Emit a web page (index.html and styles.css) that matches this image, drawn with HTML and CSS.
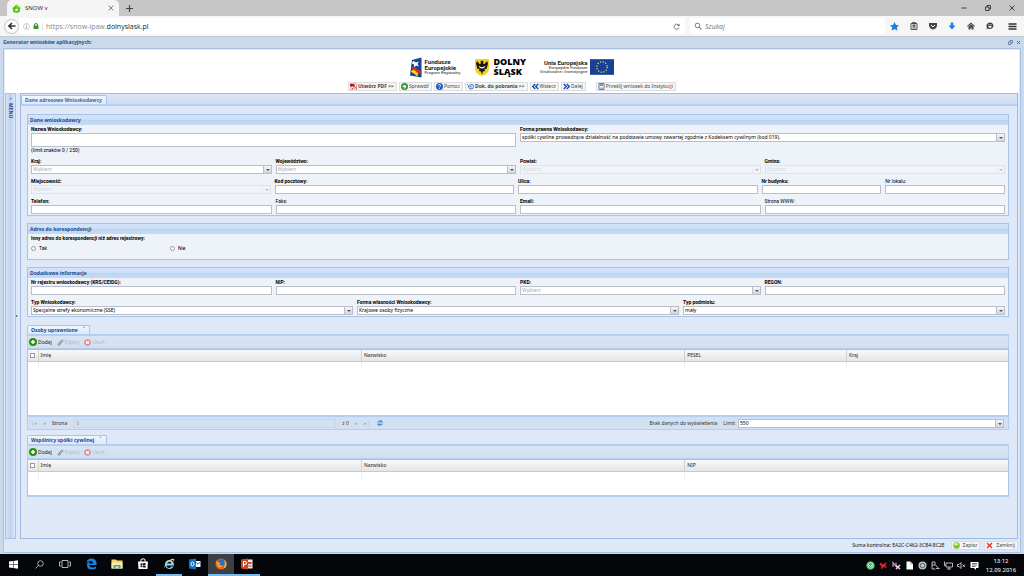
FILE: index.html
```html
<!DOCTYPE html>
<html lang="pl">
<head>
<meta charset="utf-8">
<title>SNOW v</title>
<link rel="stylesheet" href="styles.css">
</head>
<body>
<svg class="defs" aria-hidden="true">
  <symbol id="add" viewBox="0 0 16 16"><circle cx="8" cy="8" r="8" fill="#2f8f14"/><path d="M8 4v8M4 8h8" stroke="#fff" stroke-width="3"/></symbol>
  <symbol id="clip" viewBox="0 0 16 16"><path d="M2 13 10 3q3-2 4 1L6 14q-3 1-3-1l7-8" fill="none" stroke="#777" stroke-width="1.6"/></symbol>
  <symbol id="del" viewBox="0 0 16 16"><circle cx="8" cy="8" r="7.5" fill="#e08a94"/><path d="M5 5l6 6M11 5l-6 6" stroke="#fff" stroke-width="3"/></symbol>
  <symbol id="refresh" viewBox="0 0 16 16"><path d="M2 8q1-6 7-5l1-2 4 5-6 2 1-2q-4 0-7 2zM14 8q-1 6-7 5l-1 2-4-5 6-2-1 2q4 0 7-2z" fill="#4a93e0"/></symbol>
</svg>

<div class="tabstrip">
  <div class="browser-tab">
    <svg class="i9" viewBox="0 0 16 16"><path d="M0 8 8 1l8 6-2 2v5l-6 2-6-2V9z" fill="#55c21c"/><path d="M6 9l4-1v4l-4 1z" fill="#e9ffd8"/><path d="M8 1l8 6-3 1-6-4z" fill="#8be04a"/></svg>
    <span>SNOW v</span>
    <svg class="i6 tab-close" viewBox="0 0 12 12"><path d="M1 1l10 10M11 1 1 11" stroke="#666" stroke-width="1.6"/></svg>
  </div>
  <svg class="i7 newtab" viewBox="0 0 12 12"><path d="M6 0v12M0 6h12" stroke="#444" stroke-width="2"/></svg>
  <div class="win-buttons">
    <svg class="i6" viewBox="0 0 12 12"><path d="M1 6h10" stroke="#222" stroke-width="1.6"/></svg>
    <svg class="i6" viewBox="0 0 12 12"><path d="M1 4h7v7H1zM4 4V1h7v7H8" fill="none" stroke="#222" stroke-width="1.6"/></svg>
    <svg class="i6" viewBox="0 0 12 12"><path d="M1 1l10 10M11 1 1 11" stroke="#222" stroke-width="1.6"/></svg>
  </div>
</div>

<div class="navbar">
  <button class="back" aria-label="Wstecz"><svg class="i8" viewBox="0 0 16 16"><path d="M8 2 2 8l6 6M2 8h13" fill="none" stroke="#333" stroke-width="3.2"/></svg></button>
  <div class="urlbar">
    <svg class="i7" viewBox="0 0 14 14"><circle cx="7" cy="7" r="6" fill="none" stroke="#999"/><path d="M7 6v5M7 3v2" stroke="#888" stroke-width="1.4"/></svg>
    <svg class="i6" viewBox="0 0 12 12"><path d="M3 6V4q0-3 3-3t3 3v2" fill="none" stroke="#3c9a28" stroke-width="2"/><path d="M1 5h10v7H1z" fill="#3c9a28"/></svg>
    <span class="url">https://snow-ipaw.<b>dolnyslask.pl</b></span>
    <svg class="i7 reload" viewBox="0 0 14 14"><path d="M11 4A5 5 0 1 0 12 9" fill="none" stroke="#666" stroke-width="1.7"/><path d="M13 1v5H8z" fill="#666"/></svg>
  </div>
  <div class="searchbar">
    <svg class="i8" viewBox="0 0 14 14"><circle cx="6" cy="6" r="4" fill="none" stroke="#777" stroke-width="1.7"/><path d="M9 9l4 4" stroke="#777" stroke-width="2"/></svg>
    <input class="search" type="text" placeholder="Szukaj" aria-label="Szukaj">
  </div>
  <div class="nav-icons">
    <svg class="i9" viewBox="0 0 18 18"><path d="M9 0l3 6 6 .6-4.500 4.200L15 17.500 9 14l-6 3.500 1.500-6.700L0 6.600 6 6z" fill="#1a7ee6"/></svg>
    <svg class="i8" viewBox="0 0 16 16"><path d="M2 3h12v12H2zM5 1h6v3H5zM5 7h6M5 9.500h6M5 12h6" fill="none" stroke="#444" stroke-width="1.8"/></svg>
    <svg class="i8" viewBox="0 0 16 16"><path d="M0 2h16v5q-1 7-8 8Q1 14 0 7z" fill="#444"/><path d="M4 6l4 4 4-4" fill="none" stroke="#fff" stroke-width="2"/></svg>
    <svg class="i8" viewBox="0 0 16 16"><path d="M5.500 1h5v6H15l-7 8-7-8h4.500z" fill="#1a7ee6"/></svg>
    <svg class="i8" viewBox="0 0 16 16"><path d="M8 1 0 8l1 1.500L8 4l7 5.500L16 8zM3 9v6h4v-4h2v4h4V9L8 5z" fill="#444"/></svg>
    <svg class="i8" viewBox="0 0 16 16"><path d="M8 1a7 6.500 0 1 1-4 12l-3 2 1-4A7 6.500 0 0 1 8 1z" fill="#444"/><path d="M4.500 8h7q-1 4-3.500 4T4.500 8z" fill="#fff"/><path d="M5 4.500h2v2H5zM9 4.500h2v2H9z" fill="#fff"/></svg>
    <svg class="i9 burger" viewBox="0 0 18 18"><path d="M1 4h16M1 9h16M1 14h16" stroke="#333" stroke-width="2.600"/></svg>
  </div>
</div>

<main class="app">
  <header class="app-title">
    <h1>Generator wniosków aplikacyjnych:</h1>
    <svg class="i4" viewBox="0 0 10 10"><path d="M1 4h5v5H1zM4 4V1h5v5H6" fill="none" stroke="#52709e" stroke-width="1.500"/></svg>
    <svg class="i4" viewBox="0 0 10 10"><path d="M2 2l6 6M8 2 2 8" stroke="#52709e" stroke-width="2"/></svg>
  </header>

  <div class="app-frame">
    <div class="banner">
      <div class="logos">
        <div class="logo fe">
          <svg viewBox="0 0 24 40"><path d="M4 5 23 0v40L0 36z" fill="#17458f"/><path d="M7 7l5 3 6-2-3 5 3 5-6-2-4 4V14L3 11z" fill="#fff"/><path d="M2 21q6-5 13 3l8 4v5L9 27z" fill="#e52330"/><path d="M1 28l6-4 10 8-3 6-5-5z" fill="#fbd50b"/></svg>
          <p><b>Fundusze<br>Europejskie</b><small>Program Regionalny</small></p>
        </div>
        <div class="logo ds">
          <svg viewBox="0 0 28 34"><path d="M0 0h28v18q0 12-14 16Q0 30 0 18z" fill="#f5d21c"/><path d="M14 3l3 2-1 4 3 1 5-6 2 5-3 11-4-1 1 5-4 1-2 6-2-6-4-1 1-5-4 1L2 9l2-5 5 6 3-1-1-4z" fill="#181818"/><path d="M7 13q7 7 14 0-2 6-7 6t-7-6z" fill="#fff"/></svg>
          <p><b>DOLNY<br>ŚLĄSK</b></p>
        </div>
        <div class="logo ue">
          <p><b>Unia Europejska</b><small>Europejskie Fundusze<br>Strukturalne i Inwestycyjne</small></p>
          <svg viewBox="0 0 46 30"><path d="M0 0h46v30H0z" fill="#164194"/><circle cx="23" cy="15" r="10" fill="none" stroke="#ffe23d" stroke-width="2.400" stroke-dasharray="2.200 3.036"/></svg>
        </div>
      </div>
      <div class="actions">
        <button class="strong"><svg class="i7" viewBox="0 0 14 14"><path d="M2 0h8l3 3v11H2z" fill="#fff" stroke="#a33"/><path d="M0 2h9v5H0z" fill="#b5121b"/><path d="M4 12q5-4 5-7 0 3 4 5-5-1-9 2z" fill="none" stroke="#b5121b"/></svg>Utwórz PDF &gt;&gt;</button>
        <button><svg class="i7" viewBox="0 0 14 14"><circle cx="7" cy="7" r="7" fill="#2b9c2b"/><path d="M4 4h4l3 3-3 4H5l2-3H3V6h3z" fill="#fff"/></svg>Sprawdź</button>
        <button><svg class="i7" viewBox="0 0 14 14"><circle cx="7" cy="7" r="7" fill="#1d5fc4"/><path d="M5 5q0-2 2-2t2 2-2 3M7 9.500v2" fill="none" stroke="#fff" stroke-width="1.800"/></svg>Pomoc</button>
        <button class="strong"><svg class="i7" viewBox="0 0 14 14"><path d="M3 6q0 6 5 6t5-5-5-4" fill="none" stroke="#3a6fc9" stroke-width="2"/><path d="M0 2l4 5 3-5M7 5v3h3" fill="none" stroke="#3a6fc9" stroke-width="1.500"/></svg>Dok. do pobrania &gt;&gt;</button>
        <button><svg class="i7" viewBox="0 0 14 14"><path d="M6.500 2l-5 5 5 5M12.500 2l-5 5 5 5" fill="none" stroke="#1746b0" stroke-width="2.800"/></svg>Wstecz</button>
        <button><svg class="i7" viewBox="0 0 14 14"><path d="M1.500 2l5 5-5 5M7.500 2l5 5-5 5" fill="none" stroke="#1746b0" stroke-width="2.800"/></svg>Dalej</button>
        <button class="send"><svg class="i7" viewBox="0 0 14 14"><path d="M2 1h10v12H2z" fill="#fff" stroke="#54749c" stroke-width="2"/><path d="M4 1h6v5H4zM5 9h4v4H5z" fill="#7c98b8"/></svg>Prześlij wniosek do Instytucji</button>
      </div>
    </div>

    <div class="workspace">
      <aside class="menu"><span class="expand">»</span><b>MENU</b></aside>
      <div class="splitter"><i></i></div>
      <section class="main">
        <div class="main-tabs"><button>Dane adresowe Wnioskodawcy</button></div>
        <form class="content">
          <fieldset class="panel">
            <h2>Dane wnioskodawcy</h2>
            <div class="body">
              <div class="row two first">
                <div class="field"><label for="nazwa">Nazwa Wnioskodawcy:</label><textarea id="nazwa" rows="1"></textarea><span class="note">(limit znaków 0 / 250)</span></div>
                <div class="field"><label for="forma">Forma prawna Wnioskodawcy:</label><span class="pick"><select id="forma"><option>spółki cywilne prowadzące działalność na podstawie umowy zawartej zgodnie z Kodeksem cywilnym (kod 019).</option></select></span></div>
              </div>
              <div class="row four">
                <div class="field"><label for="kraj">Kraj:</label><span class="pick empty"><select id="kraj"><option>Wybierz</option></select></span></div>
                <div class="field"><label for="woj">Województwo:</label><span class="pick empty"><select id="woj"><option>Wybierz</option></select></span></div>
                <div class="field"><label for="powiat">Powiat:</label><span class="pick off"><select id="powiat" disabled><option>Wybierz</option></select></span></div>
                <div class="field"><label for="gmina">Gmina:</label><span class="pick off"><select id="gmina" disabled><option>Wybierz</option></select></span></div>
              </div>
              <div class="row five">
                <div class="field"><label for="miejsc">Miejscowość:</label><span class="pick off"><select id="miejsc" disabled><option>Wybierz</option></select></span></div>
                <div class="field"><label for="kod">Kod pocztowy:</label><input type="text" id="kod"></div>
                <div class="field"><label for="ulica">Ulica:</label><input type="text" id="ulica"></div>
                <div class="field"><label for="bud">Nr budynku:</label><input type="text" id="bud"></div>
                <div class="field plain"><label for="lok">Nr lokalu:</label><input type="text" id="lok"></div>
              </div>
              <div class="row four">
                <div class="field"><label for="tel">Telefon:</label><input type="text" id="tel"></div>
                <div class="field plain"><label for="faks">Faks:</label><input type="text" id="faks"></div>
                <div class="field"><label for="email">Email:</label><input type="text" id="email"></div>
                <div class="field plain"><label for="www">Strona WWW:</label><input type="text" id="www"></div>
              </div>
            </div>
          </fieldset>

          <fieldset class="panel">
            <h2>Adres do korespondencji</h2>
            <div class="body address">
              <p class="question">Inny adres do korespondencji niż adres rejestrowy:</p>
              <div class="radios">
                <label><input type="radio" name="inny">Tak</label>
                <label><input type="radio" name="inny">Nie</label>
              </div>
            </div>
          </fieldset>

          <fieldset class="panel">
            <h2>Dodatkowe informacje</h2>
            <div class="body">
              <div class="row four">
                <div class="field"><label for="krs">Nr rejestru wnioskodawcy (KRS/CEIDG):</label><input type="text" id="krs"></div>
                <div class="field"><label for="nip">NIP:</label><input type="text" id="nip"></div>
                <div class="field"><label for="pkd">PKD:</label><span class="pick empty"><select id="pkd"><option>Wybierz</option></select></span></div>
                <div class="field"><label for="regon">REGON:</label><input type="text" id="regon"></div>
              </div>
              <div class="row three">
                <div class="field"><label for="typ">Typ Wnioskodawcy:</label><span class="pick"><select id="typ"><option>Specjalne strefy ekonomiczne (SSE)</option></select></span></div>
                <div class="field"><label for="wlas">Forma własności Wnioskodawcy:</label><span class="pick"><select id="wlas"><option>Krajowe osoby fizyczne</option></select></span></div>
                <div class="field"><label for="podm">Typ podmiotu:</label><span class="pick"><select id="podm"><option>mały</option></select></span></div>
              </div>
            </div>
          </fieldset>

          <section class="grid">
            <div class="grid-tabs"><button type="button">Osoby uprawnione<sup>^</sup></button></div>
            <div class="toolbar">
              <button type="button"><svg class="i8"><use href="#add"/></svg>Dodaj</button>
              <button type="button" disabled><svg class="i7"><use href="#clip"/></svg>Edytuj</button>
              <button type="button" disabled><svg class="i7"><use href="#del"/></svg>Usuń</button>
            </div>
            <div class="table-wrap tall">
              <table>
                <colgroup><col class="c-check"><col class="c-wide"><col class="c-wide"><col><col></colgroup>
                <thead><tr><th><input type="checkbox" aria-label="Zaznacz wszystko"></th><th>Imię</th><th>Nazwisko</th><th>PESEL</th><th>Kraj</th></tr></thead>
                <tbody><tr><td></td><td></td><td></td><td></td><td></td></tr></tbody>
              </table>
            </div>
            <div class="pager">
              <button type="button" class="dim">|◂</button><button type="button" class="dim">◂</button>
              <label for="page">Strona</label><input type="text" id="page" value="0" disabled>
              <span>z 0</span>
              <button type="button" class="dim">▸</button><button type="button" class="dim">▸|</button>
              <button type="button" aria-label="Odśwież"><svg class="i8"><use href="#refresh"/></svg></button>
              <span class="info">Brak danych do wyświetlenia</span>
              <label for="limit">Limit</label>
              <span class="pick limit"><select id="limit"><option>550</option></select></span>
            </div>
          </section>

          <section class="grid">
            <div class="grid-tabs"><button type="button">Wspólnicy spółki cywilnej<sup>^</sup></button></div>
            <div class="toolbar">
              <button type="button"><svg class="i8"><use href="#add"/></svg>Dodaj</button>
              <button type="button" disabled><svg class="i7"><use href="#clip"/></svg>Edytuj</button>
              <button type="button" disabled><svg class="i7"><use href="#del"/></svg>Usuń</button>
            </div>
            <div class="table-wrap">
              <table>
                <colgroup><col class="c-check"><col class="c-wide"><col class="c-wide"><col></colgroup>
                <thead><tr><th><input type="checkbox" aria-label="Zaznacz wszystko"></th><th>Imię</th><th>Nazwisko</th><th>NIP</th></tr></thead>
                <tbody><tr><td></td><td></td><td></td><td></td></tr></tbody>
              </table>
            </div>
          </section>
        </form>
      </section>
    </div>

    <footer class="app-foot">
      <span>Suma kontrolna: EA2C-C462-3CB4-8C2E</span>
      <button><svg class="i7" viewBox="0 0 14 14"><circle cx="7" cy="7" r="6.500" fill="#7dc52a"/><ellipse cx="6" cy="4.500" rx="4" ry="2.500" fill="#d5f2a8"/></svg>Zapisz</button>
      <button><svg class="i7" viewBox="0 0 14 14"><path d="M2 2l10 10M12 2 2 12" stroke="#e0392f" stroke-width="3"/></svg>Zamknij</button>
    </footer>
  </div>
</main>

<nav class="taskbar">
  <span class="task"><svg class="i9" viewBox="0 0 18 18"><path d="M0 3l8-1v6.500H0zM9 2l9-1.500v8H9zM0 9.500h8V16l-8-1zM9 9.500h9v8L9 16z" fill="#fff"/></svg></span>
  <span class="task"><svg class="i9" viewBox="0 0 18 18"><circle cx="11" cy="7" r="5.500" fill="none" stroke="#ddd" stroke-width="1.500"/><path d="M7 11l-6 6" stroke="#ddd" stroke-width="1.500"/></svg></span>
  <span class="task"><svg class="i12" viewBox="0 0 24 24"><path d="M6 5h12v14H6zM4 8H1v8h3M20 8h3v8h-3" fill="none" stroke="#ddd" stroke-width="1.600"/></svg></span>
  <span class="task"><svg class="i12" viewBox="0 0 24 24"><path d="M2 11Q4 1 13 1t10 9v4H9q0 5 6 5 4 0 7-2v4q-3 2-8 2-10 0-10-9 0-6 6-8-2 2-2 5h8q0-5-5-5-6 0-9 4z" fill="#1583e0"/></svg></span>
  <span class="task"><svg class="i12" viewBox="0 0 24 24"><path d="M1 3h9l2 2h11v16H1z" fill="#f7d774"/><path d="M1 9h22v12H1z" fill="#fce9a5"/><path d="M5 14h14v7h-4v-4H9v4H5z" fill="#3ca4e4"/></svg></span>
  <span class="task"><svg class="i12" viewBox="0 0 24 24"><path d="M2 7h20l-1 15H3z" fill="#fff"/><path d="M8 8V3q4-3 8 0v5" fill="none" stroke="#fff" stroke-width="2"/><path d="M7 11l4-.5V14H7zM12 10.400l5-.6V14h-5zM7 15h4v3.500L7 18zM12 15h5v4.500l-5-.8z" fill="#111"/></svg></span>
  <span class="task open"><svg class="i12" viewBox="0 0 24 24"><path d="M12 4a9 9 0 1 0 9 13h-5q-1 3-4 3-4 0-5-5h15Q22 4 12 4zM7 11q1-4 5-4t5 4z" fill="#8fd8fa"/><path d="M3 22Q0 18 8 9T22 2q2 2-1 6 1-4-2-4-6 1-12 8T3 22z" fill="#f8d24a"/></svg></span>
  <span class="task"><svg class="i12" viewBox="0 0 24 24"><path d="M12 6h11v12H12z" fill="#fff"/><path d="M13 8l5 4 5-4" fill="none" stroke="#0b72c6" stroke-width="2"/><path d="M0 3l14-2v22L0 21z" fill="#0b72c6"/><ellipse cx="7" cy="12" rx="3" ry="4" fill="none" stroke="#fff" stroke-width="2"/></svg></span>
  <span class="task open active"><svg class="i12" viewBox="0 0 24 24"><circle cx="12" cy="12" r="11" fill="#e8621a"/><circle cx="13" cy="10" r="7.500" fill="#2d6fb6"/><path d="M2 5q2 3 6 3l3 3-2 2q3 4 8 1-2 6-8 5T2 5z" fill="#f79a1f"/><path d="M18 3q7 6 4 14-2 3-5 4 5-8 1-18z" fill="#fbc02d"/></svg></span>
  <span class="task open"><svg class="i12" viewBox="0 0 24 24"><path d="M12 3h11v18H12z" fill="#f6e8e4"/><path d="M14 8h7v4h-7zM14 15h7v2h-7z" fill="#d24726"/><path d="M0 3l14-2v22L0 21z" fill="#d24726"/><path d="M5 18V7h3q3 0 3 3t-3 3H5" fill="none" stroke="#fff" stroke-width="2"/></svg></span>
  <div class="tray">
    <svg class="i9" viewBox="0 0 18 18"><circle cx="9" cy="9" r="8.500" fill="#2fb457"/><circle cx="9" cy="9" r="5.500" fill="none" stroke="#fff" stroke-width="1.500"/><path d="M5 7l4 4 4-3" fill="none" stroke="#fff" stroke-width="2"/></svg>
    <svg class="i9" viewBox="0 0 18 18"><path d="M3 3l5 4 8-5-3 7 3 5-6-2-6 5 1-7-4-3z" fill="#d9262c"/></svg>
    <svg class="i9" viewBox="0 0 18 18"><path d="M2 12V3l6 8V3" fill="none" stroke="#d890c8" stroke-width="2.400"/><path d="M8 9l8 7M16 8l-8 8" stroke="#f3d6ee" stroke-width="3"/></svg>
    <svg class="i9" viewBox="0 0 18 18"><path d="M3 1h8l5 5v11H3z" fill="#fff"/><path d="M11 1v5h5" fill="none" stroke="#777"/></svg>
    <svg class="i9" viewBox="0 0 18 18"><circle cx="9" cy="9" r="8" fill="#b9c7cc"/><circle cx="9" cy="9" r="4.500" fill="none" stroke="#4c6068" stroke-width="2"/></svg>
    <svg class="i9" viewBox="0 0 18 18"><path d="M2 2h6v6H2zM2 8v8h7M9 8l7 8M10 15h7" fill="none" stroke="#ccc" stroke-width="1.800"/></svg>
    <svg class="i9" viewBox="0 0 18 18"><path d="M4 4h13v8H4zM10 12v4M6 16h8M1 1v8h3" fill="none" stroke="#eee" stroke-width="1.500"/></svg>
    <svg class="i9" viewBox="0 0 18 18"><path d="M1 7h3l4-4v12l-4-4H1zM11 7l5 5M16 7l-5 5" fill="none" stroke="#eee" stroke-width="1.500"/></svg>
    <svg class="i9" viewBox="0 0 18 18"><path d="M1 2h16v12h-5v4l-4-4H1z" fill="#fff"/><path d="M4 5h10M4 8h10M4 11h7" stroke="#222" stroke-width="1.300"/></svg>
    <div class="clock">13:12<br>12.09.2016</div>
  </div>
</nav>
</body>
</html>
```

FILE: styles.css
```css
* { box-sizing: border-box; }

body {
  margin: 0;
  height: 100vh;
  display: flex;
  flex-direction: column;
  overflow: hidden;
  font: 5px/7px "Noto Sans", "Open Sans", sans-serif;
  color: #222;
}

h1, h2, p { margin: 0; }
svg { flex: none; display: block; }
button, input, select, textarea { font: inherit; color: inherit; margin: 0; padding: 0; border: 0; border-radius: 0; background: none; }
.defs { width: 0; height: 0; position: absolute; }

.i4 { width: 5px; height: 5px; }
.i6 { width: 6px; height: 6px; }
.i7 { width: 7px; height: 7px; }
.i8 { width: 8px; height: 8px; }
.i9 { width: 9px; height: 9px; }
.i12 { width: 12px; height: 12px; }

/* Browser chrome */
.tabstrip {
  flex: none;
  height: 16px;
  display: flex;
  align-items: center;
  background: #c6c6c6;
}
.browser-tab {
  align-self: stretch;
  width: 112px;
  margin-left: 7px;
  padding: 0 5px;
  display: flex;
  align-items: center;
  gap: 4px;
  background: #f5f5f5;
  border-radius: 5px 5px 0 0;
  font-family: "Open Sans", sans-serif;
  font-size: 6px;
}
.tab-close { margin-left: auto; }
.newtab { margin-left: 7px; }
.win-buttons { margin-left: auto; padding-right: 9px; display: flex; gap: 18px; }

.navbar {
  flex: none;
  height: 21px;
  padding: 0 7px 0 4px;
  display: flex;
  align-items: center;
  background: #f6f6f6;
  border-bottom: 1px solid #c3c7cb;
  font-family: "Open Sans", sans-serif;
  font-size: 7px;
}
.back {
  width: 15px;
  height: 15px;
  border: 1px solid #c4c4c4;
  border-radius: 50%;
  background: #fcfcfc;
  display: grid;
  place-items: center;
}
.urlbar, .searchbar {
  height: 16px;
  display: flex;
  align-items: center;
  gap: 3px;
  background: #fff;
}
.urlbar { flex: 1; padding: 0 5px 0 4px; }
.url { padding-left: 3px; border-left: 1px solid #ddd; color: #888; }
.url b { color: #222; font-weight: 500; }
.reload { margin-left: auto; }
.searchbar { width: 195px; margin-left: 5px; padding-left: 4px; }
.search { flex: 1; min-width: 0; font-style: italic; }
.search::placeholder { color: #777; }
.nav-icons { display: flex; align-items: center; gap: 11px; margin-left: 5px; }
.burger { margin-left: 3px; }

/* Application window */
.app {
  flex: 1;
  min-height: 0;
  display: flex;
  flex-direction: column;
  padding: 0 3px 1px;
  background: #cbdaea;
}
.app-title {
  flex: none;
  height: 11px;
  display: flex;
  align-items: center;
  gap: 3px;
}
.app-title h1 {
  flex: 1;
  font-size: 5px;
  line-height: 7px;
  color: #2a4f87;
}
.app-frame {
  flex: 1;
  min-height: 0;
  display: flex;
  flex-direction: column;
  padding: 1px 1px 0;
  border: 1px solid #a9c2e6;
  background: #dfe8f6;
}

.banner { flex: none; height: 43px; padding-top: 6px; background: #fff; }
.logos { display: flex; justify-content: center; height: 22px; }
.logo { display: flex; align-items: center; gap: 3px; color: #222; }
.logo small { display: block; font: 4px/4px Roboto, sans-serif; }
.fe svg { width: 12px; height: 21px; }
.fe p { font: 6px/6px Roboto, sans-serif; }
.ds { margin-left: 15px; gap: 4px; }
.ds svg { width: 14px; height: 17px; }
.ds p { font: 9px/10px "Open Sans", sans-serif; color: #000; }
.ds b { font-weight: 800; }
.ue { margin-left: 14px; }
.ue p { text-align: right; font: 6px/6px Roboto, sans-serif; }
.ue svg { width: 24px; height: 16px; }

.actions { display: flex; justify-content: center; gap: 2px; padding-top: 4px; }
.actions button, .app-foot button {
  height: 9px;
  padding: 0 2px 0 1px;
  display: flex;
  align-items: center;
  gap: 1px;
  color: #444;
  background: #f6f6f6;
  border: 1px solid #dcdcdc;
}
.actions .strong { font-weight: 700; }
.actions .send { margin-left: 8px; }

.workspace { flex: 1; min-height: 0; display: flex; }
.menu {
  width: 11px;
  display: flex;
  flex-direction: column;
  align-items: center;
  color: #2a4f87;
  background: linear-gradient(90deg, #d5e2f5, #bdd2f0 50%, #dce8f9);
  border: 1px solid #a9c2e6;
}
.menu b { writing-mode: vertical-rl; line-height: 8px; }
.expand { line-height: 9px; }
.splitter { width: 4px; display: flex; align-items: center; }
.splitter i { border: 1px solid transparent; border-left: 2px solid #445; }

.main {
  flex: 1;
  min-width: 0;
  display: flex;
  flex-direction: column;
  border: 1px solid #9fbbe4;
  margin-right: 1px;
}
.main-tabs {
  flex: none;
  height: 12px;
  padding-top: 1px;
  background: linear-gradient(#dce6f4, #cddcf0);
  border-bottom: 2px solid #b4cdf2;
  display: flex;
}
.main-tabs button, .grid-tabs button {
  padding: 0 4px 0 3px;
  font-weight: 700;
  color: #416aa3;
  border: 1px solid #a8c4ec;
  border-bottom: 0;
  border-radius: 2px 2px 0 0;
  background: linear-gradient(#f0f6fe, #dce9fb);
}
.content { flex: 1; min-height: 0; padding: 8px 8px 0 6px; background: #dfe8f6; }

.panel {
  min-width: 0;
  margin: 0 0 7px;
  padding: 0;
  border: 1px solid #a6c3ec;
}
.panel h2 {
  height: 10px;
  padding-left: 2px;
  font-size: 5px;
  line-height: 10px;
  color: #1d4a92;
  background: linear-gradient(#d3e3f8, #c8e0f8 50%, #bcd4f4 55%, #c6daf6);
}
.body { padding: 1px 3px 1px; background: #eef2f9; }
.row { display: grid; gap: 4px; margin-bottom: 4px; }
.row:last-child { margin-bottom: 0; }
.two { grid-template-columns: repeat(2, minmax(0, 1fr)); }
.three { grid-template-columns: repeat(3, minmax(0, 1fr)); }
.four { grid-template-columns: repeat(4, minmax(0, 1fr)); }
.five { grid-template-columns: 2fr 2fr 2fr 1fr 1fr; }
.first { margin-bottom: 5px; }

.field { min-width: 0; display: flex; flex-direction: column; }
.field label, .note, .question, .radios { font: 5px/7px Roboto, sans-serif; color: #000; }
.field label, .question { font-weight: 700; }
.field.plain label { font-weight: 400; }
.field input, .pick {
  width: 100%;
  height: 9px;
  border: 1px solid #b9bec8;
  background: #fff;
}
.field textarea {
  height: 14px;
  border: 1px solid #b9bec8;
  background: #fff;
  resize: none;
}
.note { line-height: 6px; }

.pick { position: relative; display: flex; }
.pick select { flex: 1; min-width: 0; padding-left: 1px; appearance: none; color: #000; line-height: 7px; }
.pick::after {
  content: "";
  position: absolute;
  top: 0;
  right: 0;
  bottom: 0;
  width: 7px;
  background: linear-gradient(#f6f6f6, #d2d5da);
  border-left: 1px solid #b9bec8;
  pointer-events: none;
}
.pick::before {
  content: "";
  position: absolute;
  z-index: 1;
  top: 3px;
  right: 1px;
  border: 2px solid transparent;
  border-top-color: #555;
  border-bottom: 0;
  pointer-events: none;
}
.empty select { color: #aaa; }
.off { background: #f0f3f9; border-color: #dfe3eb; }
.off select { color: #d8dbe0; opacity: 1; }
.off::after { background: #f0f3f9; border-color: #e6e9ef; }
.off::before { border-top-color: #bbb; }

.address { height: 25px; }
.radios { display: flex; padding-top: 3px; }
.radios label { width: 139px; display: flex; align-items: center; gap: 3px; }
.radios input { width: 5px; height: 5px; appearance: none; border: 1px solid #999; border-radius: 50%; background: #fff; }

/* Record lists */
.grid { margin-bottom: 4px; }
.grid-tabs { display: flex; height: 12px; padding-top: 1px; border-bottom: 2px solid #b4cdf2; }
.grid-tabs button { color: #1d4a92; }
.grid-tabs sup { padding-left: 5px; font-size: 4px; line-height: 1px; color: #666; }
.toolbar {
  height: 13px;
  padding: 0 1px;
  display: flex;
  align-items: center;
  gap: 5px;
  background: linear-gradient(#d7e4f4, #cfe0f2);
  border: 1px solid #b4cdf2;
  border-top: 0;
}
.toolbar button { display: flex; align-items: center; gap: 1px; }
.toolbar button:disabled { color: #b4bac4; }
.table-wrap { height: 38px; background: #fff; border: 1px solid #a9c2e6; border-bottom: 2px solid #b4cdf2; }
.table-wrap.tall { height: 68px; }
table { width: 100%; table-layout: fixed; border-collapse: collapse; }
.c-check { width: 10px; }
.c-wide { width: 33%; }
th {
  height: 11px;
  padding: 0 2px;
  text-align: left;
  font-weight: 400;
  background: linear-gradient(#f9f9f9, #e4e5e8);
  border-right: 1px solid #cfd1d5;
  border-bottom: 1px solid #c8cacd;
}
th input { display: block; width: 5px; height: 5px; appearance: none; border: 1px solid #999; background: #fff; }
td { height: 8px; padding: 0; border-right: 1px solid #eee; }
th:last-child, td:last-child { border-right: 0; }

.pager {
  height: 13px;
  padding: 0 4px 0 3px;
  display: flex;
  align-items: center;
  gap: 6px;
  background: #d3e0f1;
  border: 1px solid #b4cdf2;
  border-top: 0;
  color: #333;
}
.pager input { flex: 1; min-width: 0; height: 9px; padding-left: 2px; border: 1px solid #c7d6ea; color: #999; }
.pager .dim { color: #9fb0c6; }
.info { margin-left: 260px; }
.pager label[for="limit"] { margin-right: -3px; }
.pager .limit { width: 266px; height: 9px; }

.app-foot {
  flex: none;
  height: 13px;
  padding-right: 1px;
  display: flex;
  justify-content: flex-end;
  align-items: center;
  gap: 4px;
}
.app-foot button { gap: 3px; }
.app-foot span { padding-right: 2px; color: #111; }

/* Windows taskbar */
.taskbar { flex: none; height: 22px; display: flex; background: #04060a; }
.task { width: 26px; display: grid; place-items: center; border-bottom: 2px solid transparent; }
.task.open { border-bottom-color: #76b9ed; }
.task.active { background: #3c4046; }
.tray { margin-left: auto; display: flex; align-items: center; gap: 4px; padding-right: 8px; }
.clock { margin-left: 3px; text-align: center; color: #fff; font: 6px/9px Roboto, sans-serif; }
```
